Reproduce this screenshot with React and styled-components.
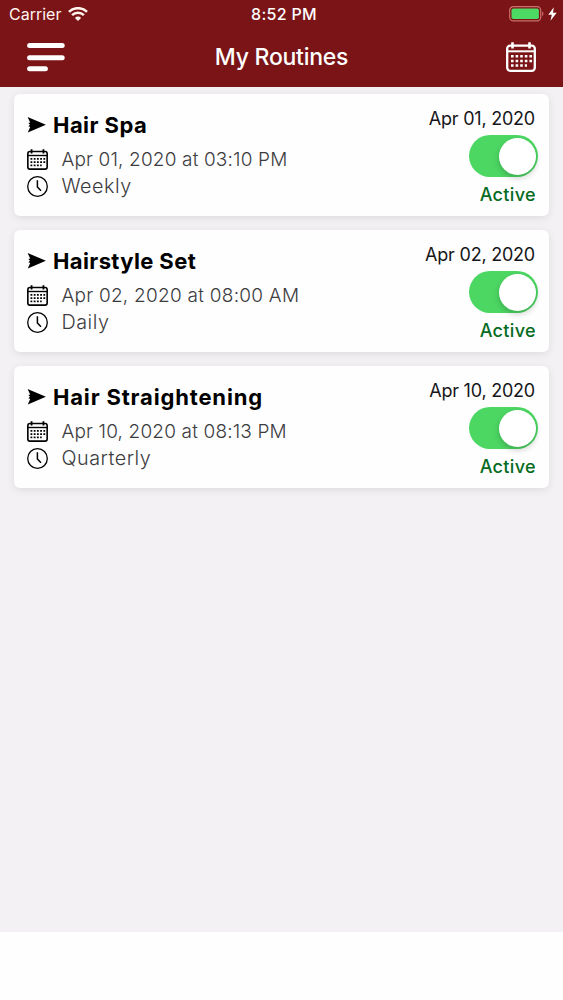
import React, { useState } from "react";
import styled, { createGlobalStyle } from "styled-components";

const routines = [
	{
		id: 1,
		title: "Hair Spa",
		titleSpacing: 0.45,
		date: "Apr 01, 2020",
		time: "Apr 01, 2020 at 03:10 PM",
		timeSpacing: 0.16,
		repeat: "Weekly",
		repeatSpacing: 0.5,
	},
	{
		id: 2,
		title: "Hairstyle Set",
		titleSpacing: 0.38,
		date: "Apr 02, 2020",
		time: "Apr 02, 2020 at 08:00 AM",
		timeSpacing: 0.26,
		repeat: "Daily",
		repeatSpacing: 0.5,
	},
	{
		id: 3,
		title: "Hair Straightening",
		titleSpacing: 0.83,
		date: "Apr 10, 2020",
		time: "Apr 10, 2020 at 08:13 PM",
		timeSpacing: 0.16,
		repeat: "Quarterly",
		repeatSpacing: 0.5,
	},
];

const CalendarIcon = ({ size }) => (
	<svg width={size} height={size} viewBox="0 0 30 30" fill="none" stroke="currentColor">
		<rect x="1.2" y="3.6" width="27.6" height="25.2" rx="3" strokeWidth="2.3" />
		<path d="M1.2 9.3H28.8" strokeWidth="2" />
		<path d="M6.5 0.3V6.6M23.5 0.3V6.6" strokeWidth="2.6" />
		<path
			d="M5 14.2H26M5 18.9H26M5 23.5H21"
			strokeWidth="2.5"
			strokeDasharray="2.6 2"
		/>
	</svg>
);

const ClockIcon = () => (
	<svg width="21" height="21" viewBox="0 0 21 21" fill="none" stroke="currentColor">
		<circle cx="10.5" cy="10.5" r="9.8" strokeWidth="1.3" />
		<path d="M10.4 4.2V11L14 14.8" strokeWidth="1.5" />
	</svg>
);

const ArrowIcon = () => (
	<svg width="19" height="16" viewBox="0 0 19 16" fill="currentColor">
		<path d="M0.6 0L18.9 7.7L0.8 15.4L3.2 9.9L1.4 9.3L3 7.7L1.4 6.1L3.2 5.5Z" />
	</svg>
);

const WifiIcon = () => (
	<svg width="20" height="14" viewBox="0 0 20 14" fill="none" stroke="currentColor">
		<path d="M1 4.9A12.9 12.9 0 0 1 19 4.9" strokeWidth="2.7" />
		<path d="M4.1 8.2A8.4 8.4 0 0 1 15.9 8.2" strokeWidth="2.5" />
		<path d="M6.9 10.9A4.5 4.5 0 0 1 13.1 10.9L10 14Z" fill="currentColor" stroke="none" />
	</svg>
);

const BatteryIcon = () => (
	<svg width="35" height="16" viewBox="0 0 35 16" fill="none">
		<rect x="0.7" y="0.7" width="31" height="14.2" rx="3.6" stroke="#c9706b" strokeWidth="1.2" />
		<rect x="2.5" y="2.5" width="27.4" height="10.6" rx="1.8" fill="#4cd964" />
		<path d="M33.2 5.2C34.9 6.2 34.9 9.4 33.2 10.4Z" fill="#c9706b" />
	</svg>
);

const BoltIcon = () => (
	<svg width="9" height="14" viewBox="0 0 9 14" fill="currentColor">
		<path d="M5.8 0.2L0.3 7.8H3.8L2.5 13.8L8.7 5.7H5Z" />
	</svg>
);

const MenuIcon = () => (
	<svg width="38" height="29" viewBox="0 0 38 29" stroke="currentColor" strokeWidth="5" strokeLinecap="round">
		<path d="M2.6 2.6H35.2M2.6 14.8H35.2M2.6 25.8H18.4" />
	</svg>
);

const RoutineCard = ({ routine }) => {
	const [active, setActive] = useState(true);

	return (
		<Card>
			<Details>
				<Title $spacing={routine.titleSpacing}>
					<ArrowIcon />
					<span>{routine.title}</span>
				</Title>
				<DetailRow $spacing={routine.timeSpacing}>
					<CalendarIcon size={21} />
					<span>{routine.time}</span>
				</DetailRow>
				<DetailRow $spacing={routine.repeatSpacing} $large>
					<ClockIcon />
					<span>{routine.repeat}</span>
				</DetailRow>
			</Details>
			<Status>
				<StartDate>{routine.date}</StartDate>
				<Toggle
					type="button"
					role="switch"
					aria-checked={active}
					$active={active}
					onClick={() => setActive(!active)}
				>
					<Knob />
				</Toggle>
				<StatusText $active={active}>{active ? "Active" : "Inactive"}</StatusText>
			</Status>
		</Card>
	);
};

const App = () => (
	<Screen>
		<GlobalStyle />
		<Header>
			<StatusBar>
				<Carrier>
					<span>Carrier</span>
					<WifiIcon />
				</Carrier>
				<Clock>8:52 PM</Clock>
				<Power>
					<BatteryIcon />
					<BoltIcon />
				</Power>
			</StatusBar>
			<NavBar>
				<IconButton aria-label="Menu">
					<MenuIcon />
				</IconButton>
				<Heading>My Routines</Heading>
				<IconButton aria-label="Calendar" $end>
					<CalendarIcon size={30} />
				</IconButton>
			</NavBar>
		</Header>
		<List>
			{routines.map((routine) => (
				<RoutineCard key={routine.id} routine={routine} />
			))}
		</List>
	</Screen>
);

export default App;

const GlobalStyle = createGlobalStyle`
	* {
		box-sizing: border-box;
	}

	body {
		margin: 0;
		background-color: #fefefe;
		font-family: Inter, "Liberation Sans", sans-serif;
	}

	svg {
		display: block;
		flex-shrink: 0;
	}
`;
const Screen = styled.div`
	display: flex;
	flex-direction: column;
	height: 932px;
	background-color: #f3f1f4;
`;
const Header = styled.header`
	height: 87px;
	background-color: #7a1417;
	color: #fff;
`;
const StatusBar = styled.div`
	display: grid;
	grid-template-columns: 1fr auto 1fr;
	align-items: center;
	height: 28px;
	padding: 0 6px 0 9px;
	font-size: 16px;
`;
const Carrier = styled.div`
	display: flex;
	align-items: center;
	gap: 7px;
	color: #fff3ee;
`;
const Clock = styled.div`
	font-weight: 500;
	letter-spacing: 0.3px;
	padding-left: 2px;
`;
const Power = styled.div`
	display: flex;
	justify-content: flex-end;
	align-items: center;
	gap: 4px;
`;
const NavBar = styled.nav`
	display: grid;
	grid-template-columns: 1fr auto 1fr;
	align-items: center;
	height: 58px;
	padding: 0 27px;
`;
const IconButton = styled.button`
	display: flex;
	justify-self: ${({ $end }) => ($end ? "end" : "start")};
	border: none;
	padding: 0;
	background: none;
	color: #fff;
	cursor: pointer;
`;
const Heading = styled.h1`
	margin: 0;
	font-size: 23px;
	font-weight: 500;
	line-height: 30px;
	letter-spacing: -0.25px;
`;
const List = styled.main`
	display: flex;
	flex-direction: column;
	gap: 14px;
	padding: 7px 14px;
`;
const Card = styled.section`
	display: flex;
	justify-content: space-between;
	height: 122px;
	padding: 13px 11px 10px 13px;
	border-radius: 6px;
	background-color: #fefefe;
	box-shadow: 0 2px 8px rgba(0, 0, 0, 0.09);
`;
const Details = styled.div`
	padding-top: 4px;
`;
const Title = styled.div`
	display: flex;
	align-items: center;
	gap: 7px;
	height: 27px;
	margin-bottom: 8px;
	color: #000;
	font-size: 22px;
	font-weight: 700;
	letter-spacing: ${({ $spacing }) => $spacing}px;
	white-space: nowrap;
`;
const DetailRow = styled.div`
	display: flex;
	align-items: center;
	gap: 13.5px;
	height: 27px;
	color: #000;
	font-size: ${({ $large }) => ($large ? 19.8 : 19)}px;
	font-weight: 300;
	letter-spacing: ${({ $spacing }) => $spacing}px;
	white-space: nowrap;

	span {
		padding-bottom: ${({ $large }) => ($large ? 2 : 0)}px;
		color: #3c3c3e;
	}
`;
const Status = styled.div`
	display: flex;
	flex-direction: column;
	align-items: flex-end;
`;
const StartDate = styled.div`
	height: 22px;
	margin-bottom: 6px;
	padding-right: 3px;
	color: #16161a;
	font-size: 18px;
	line-height: 24px;
	letter-spacing: -0.22px;
`;
const Toggle = styled.button`
	display: flex;
	flex-shrink: 0;
	justify-content: ${({ $active }) => ($active ? "flex-end" : "flex-start")};
	align-items: center;
	width: 69px;
	height: 42px;
	margin-bottom: 7px;
	border: none;
	border-radius: 21px;
	padding: 2px;
	background-color: ${({ $active }) => ($active ? "#4cd763" : "#d5d5d8")};
	cursor: pointer;
`;
const Knob = styled.span`
	width: 37px;
	height: 37px;
	border-radius: 50%;
	background-color: #fff;
	box-shadow: 0 3px 6px rgba(0, 0, 0, 0.2);
`;
const StatusText = styled.div`
	padding-right: 2px;
	color: ${({ $active }) => ($active ? "#056b22" : "#7a1417")};
	font-size: 18px;
	font-weight: 500;
	line-height: 22px;
	letter-spacing: 0.35px;
`;
